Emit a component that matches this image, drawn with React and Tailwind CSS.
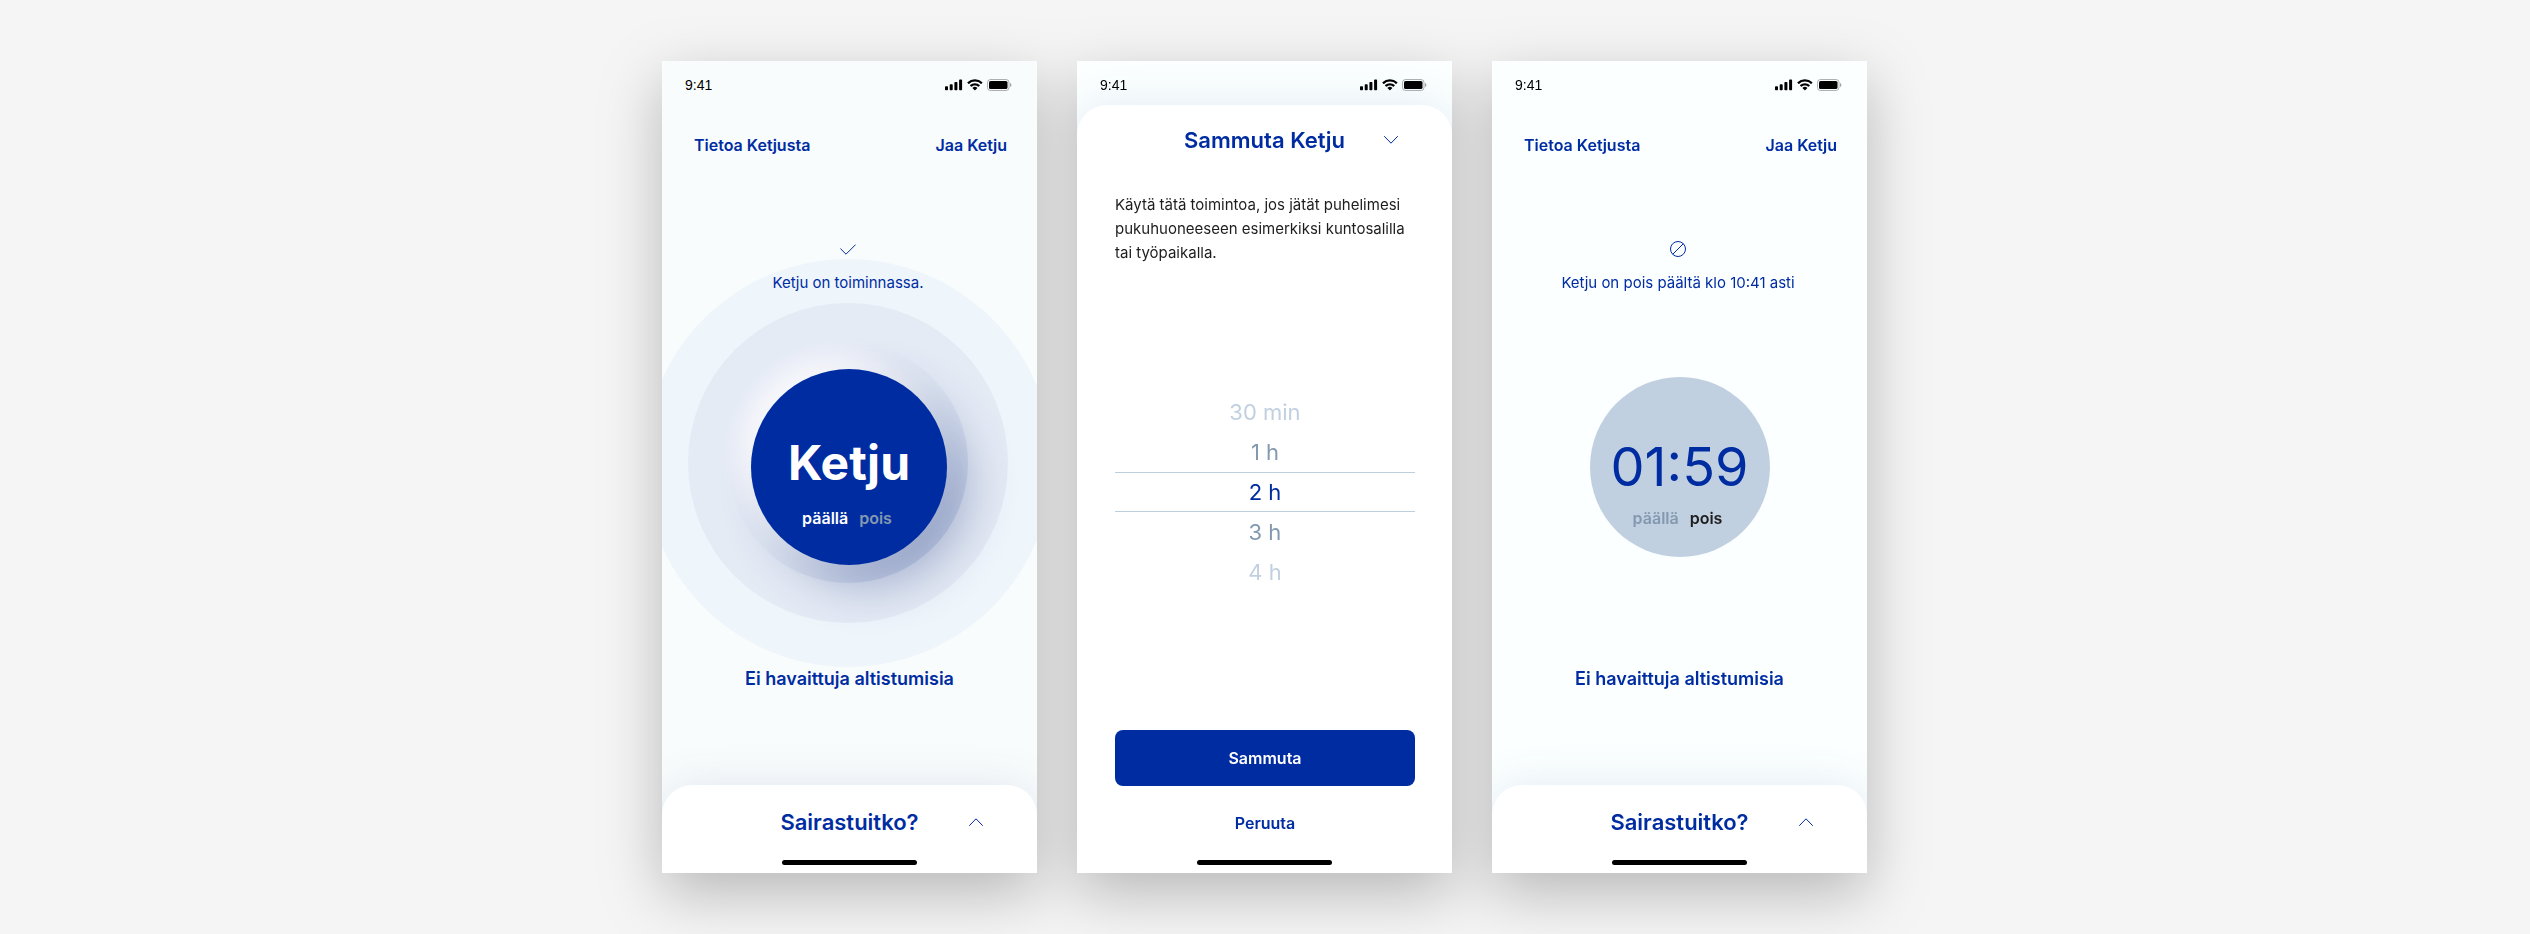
import React from "react";

const durations = [
  { label: "30 min", tone: "text-[#c1d0e0]" },
  { label: "1 h", tone: "text-[#8299b0]" },
  { label: "2 h", tone: "text-[#002ca2] border-y border-[#bacfdf]" },
  { label: "3 h", tone: "text-[#8299b0]" },
  { label: "4 h", tone: "text-[#c1d0e0]" },
];

function StatusBar() {
  return (
    <div className="flex h-11 items-center justify-between pt-1 pr-[25px] pl-[23px] text-black">
      <span className="font-['Liberation_Sans',Arial,sans-serif] text-sm">9:41</span>
      <svg className="h-3 w-[67px]" viewBox="0 0 67 12" fill="currentColor" aria-hidden="true">
        <rect x="0" y="7.3" width="3" height="3.9" rx="0.8" />
        <rect x="4.7" y="5.2" width="3" height="6" rx="0.8" />
        <rect x="9.4" y="3" width="3" height="8.2" rx="0.8" />
        <rect x="14.1" y="0.6" width="3" height="10.6" rx="0.8" />
        <path d="M29.9 2.6c2.2 0 4.3.8 5.9 2.3.1.1.3.1.4 0l1.2-1.2c.1-.1.1-.3 0-.4a10.7 10.7 0 0 0-15 0c-.1.1-.1.3 0 .4l1.2 1.2c.1.1.3.1.4 0a8.600 8.600 0 0 1 5.900-2.300z" />
        <path d="M29.900 6.400c1.200 0 2.400.5 3.300 1.300.1.1.3.1.4 0l1.200-1.200c.1-.1.1-.3 0-.4a7.100 7.100 0 0 0-9.800 0c-.1.1-.1.3 0 .4l1.200 1.200c.1.1.3.1.4 0 .9-.8 2.100-1.300 3.300-1.300z" />
        <path d="M32.200 9.200c.1-.1.1-.3 0-.4a3.600 3.600 0 0 0-4.600 0c-.1.1-.1.3 0 .4l2.100 2.100c.1.1.3.1.4 0z" />
        <rect x="42.500" y="0.500" width="21.500" height="11" rx="3" fill="none" stroke="currentColor" strokeOpacity="0.3" />
        <path d="M65 4.100v3.900c.8-.3 1.400-1.100 1.400-2s-.6-1.600-1.400-1.900z" opacity="0.35" />
        <rect x="44" y="2" width="18.500" height="8" rx="1.600" />
      </svg>
    </div>
  );
}

function HomeIndicator() {
  return <div className="mx-auto mb-2 h-[5px] w-[135px] rounded-full bg-black" />;
}

function Chevron({ up }) {
  return (
    <svg className="h-2 w-3.5" viewBox="0 0 14 8" fill="none" stroke="currentColor" strokeLinecap="round" strokeLinejoin="round" aria-hidden="true">
      <path d={up ? "M.5 7.500 7 .8l6.500 6.700" : "M.5.5 7 7.200 13.500.5"} />
    </svg>
  );
}

function SheetHeader({ title, up }) {
  return (
    <button type="button" aria-expanded={!up} className="grid w-full grid-cols-[1fr_auto_1fr] items-center text-[#002ca2]">
      <span className="col-start-2 text-[22px] leading-8 font-semibold">{title}</span>
      <span className="justify-self-end pr-[54px]">
        <Chevron up={up} />
      </span>
    </button>
  );
}

function Phone({ label, tint, children }) {
  return (
    <section aria-label={label} className={`relative isolate flex min-h-[812px] w-[375px] shrink-0 flex-col overflow-hidden ${tint}`}>
      <StatusBar />
      {children}
    </section>
  );
}

function HomeScreen({ label, tint, icon, status, dial }) {
  return (
    <Phone label={label} tint={tint}>
      <nav className="flex justify-between pt-7 pr-[30px] pl-8 text-base leading-6 font-semibold">
        <a href="#tietoa">Tietoa Ketjusta</a>
        <a href="#jaa">Jaa Ketju</a>
      </nav>
      <div className="mt-[84px] flex flex-col items-center gap-3.5 pr-[3px]">
        {icon}
        <p className="text-[15px] leading-6">{status}</p>
      </div>
      <div className="mt-[74px] flex h-[196px] items-center justify-center">{dial}</div>
      <p className="mt-[102px] text-center text-lg leading-6 font-semibold">Ei havaittuja altistumisia</p>
      <div className="mt-auto flex min-h-[88px] flex-col justify-between rounded-t-[30px] bg-white pt-[21px] shadow-[0_0_44px_rgba(60,95,160,0.13)]">
        <SheetHeader title="Sairastuitko?" up />
        <HomeIndicator />
      </div>
    </Phone>
  );
}

function DialLabels({ on, off }) {
  return (
    <span className="flex gap-[11px] pr-1 text-base leading-6 font-semibold">
      <span className={on}>päällä</span>
      <span className={off}>pois</span>
    </span>
  );
}

function ActiveDial() {
  return (
    <div className="relative mr-px">
      <div className="absolute top-1/2 left-1/2 -z-10 -mt-1 -ml-px size-[408px] -translate-1/2 rounded-full bg-[#eef5fb]" />
      <div className="absolute top-1/2 left-1/2 -z-10 -mt-1 -ml-px size-[320px] -translate-1/2 rounded-full bg-[#e5ebf5]" />
      <div className="absolute top-1/2 left-1/2 -z-10 -mt-1 -ml-px size-[240px] -translate-1/2 rounded-full bg-linear-135 from-[#eceef9] via-[#dfe7f3] to-[#c6cfe5]" />
      <button
        type="button"
        aria-pressed="true"
        className="flex size-[196px] flex-col items-center rounded-full bg-[#002ca2] pt-[66px] shadow-[20px_20px_50px_rgba(0,30,110,0.3),-8px_-8px_22px_2px_#ffffff]"
      >
        <span className="text-[48px] leading-[56px] font-bold text-white">Ketju</span>
        <span className="mt-[15px]">
          <DialLabels on="text-white" off="text-[#8299b0]" />
        </span>
      </button>
    </div>
  );
}

function PausedDial() {
  return (
    <button type="button" aria-pressed="false" className="flex size-[180px] flex-col items-center rounded-full bg-[#c1d0e0] pt-[58px]">
      <span className="text-[54px] leading-[64px]">01:59</span>
      <span className="mt-[7px]">
        <DialLabels on="text-[#8299b0]" off="text-[#1d1d1d]" />
      </span>
    </button>
  );
}

export default function App() {
  return (
    <main className="flex min-h-screen items-center justify-center bg-[#f5f5f5] pr-px font-['Inter',sans-serif] text-[#002ca2]">
      <div className="flex flex-wrap justify-center gap-10 drop-shadow-[0_20px_30px_rgba(0,0,0,0.25)]">
        <HomeScreen
          label="Ketju päällä"
          tint="bg-[#f9fcfc]"
          status="Ketju on toiminnassa."
          icon={
            <svg className="size-4" viewBox="0 0 16 16" fill="none" stroke="currentColor" aria-hidden="true">
              <path d="M.4 7.600 6 13.200 15.600 3.600" />
            </svg>
          }
          dial={<ActiveDial />}
        />

        <Phone label="Sammuta Ketju" tint="bg-[#fbffff]">
          <div className="flex flex-1 flex-col rounded-t-[30px] bg-white pt-[19px] shadow-[0_0_44px_rgba(60,95,160,0.13)]">
            <SheetHeader title="Sammuta Ketju" />
            <p className="mt-[37px] px-[38px] text-[15px] leading-6 text-[#1d1d1d]">
              Käytä tätä toimintoa, jos jätät puhelimesi pukuhuoneeseen esimerkiksi kuntosalilla tai työpaikalla.
            </p>
            <fieldset aria-label="Kesto" className="mr-[37px] ml-[38px] mt-[127px] text-[22px]">
              {durations.map(({ label, tone }) => (
                <label key={label} className={`relative flex h-10 items-center justify-center leading-8 ${tone}`}>
                  <input type="radio" name="kesto" defaultChecked={label === "2 h"} className="absolute inset-0 appearance-none" />
                  {label}
                </label>
              ))}
            </fieldset>
            <div className="mr-[37px] mb-[25px] ml-[38px] mt-auto flex flex-col gap-[25px] text-base leading-6 font-semibold">
              <button type="button" className="h-14 rounded-lg bg-[#002ca2] text-white">
                Sammuta
              </button>
              <button type="button">Peruuta</button>
            </div>
            <HomeIndicator />
          </div>
        </Phone>

        <HomeScreen
          label="Ketju pois päältä"
          tint="bg-[#fbffff]"
          status="Ketju on pois päältä klo 10:41 asti"
          icon={
            <svg className="size-4" viewBox="0 0 16 16" fill="none" stroke="currentColor" aria-hidden="true">
              <circle cx="8" cy="8" r="7.500" />
              <path d="M2.700 13.300 13.300 2.700" />
            </svg>
          }
          dial={<PausedDial />}
        />
      </div>
    </main>
  );
}
